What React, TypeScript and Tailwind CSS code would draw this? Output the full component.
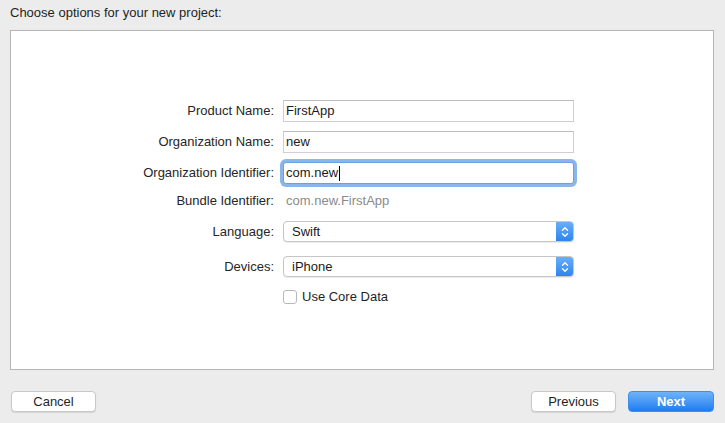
import React from "react";

const font = { fontFamily: '"Liberation Sans", Arial, sans-serif' };

function TextField({ value, focused }: { value: string; focused?: boolean }) {
  if (focused) {
    return (
      <div className="h-[22px] w-[291px] rounded-[3px] ring-[3px] ring-[#8ab6ea] border border-[#6d9fdc] bg-white px-[2px] flex items-center text-[13px] text-[#1a1a1a]">
        <span>{value}</span>
        <span className="ml-[1px] h-[15px] w-px bg-black" />
      </div>
    );
  }
  return (
    <div className="h-[22px] w-[291px] border border-[#cfcfcf] border-t-[#bdbdbd] bg-white px-[2px] flex items-center text-[13px] text-[#1a1a1a]">
      {value}
    </div>
  );
}

function Popup({ value }: { value: string }) {
  return (
    <div className="h-[21px] w-[291px] flex rounded-[4px] border border-[#c6c6c6] bg-white shadow-[0_1px_1px_rgba(0,0,0,0.08)] overflow-hidden">
      <div className="flex-1 flex items-center pl-[8px] text-[13px] text-[#1a1a1a]">{value}</div>
      <div className="w-[17px] flex items-center justify-center bg-gradient-to-b from-[#69aef7] to-[#2d84ee]">
        <svg width="8" height="12" viewBox="0 0 8 12" fill="none" stroke="white" strokeWidth="1.4" strokeLinecap="round" strokeLinejoin="round">
          <path d="M1.5 4.2 L4 1.7 L6.5 4.2" />
          <path d="M1.5 7.8 L4 10.3 L6.5 7.8" />
        </svg>
      </div>
    </div>
  );
}

function Row({ label, children, className = "" }: { label: string; children: React.ReactNode; className?: string }) {
  return (
    <div className={"flex items-center " + className}>
      <div className="w-[263px] text-right text-[13px] text-[#262626]">{label}</div>
      <div className="ml-[9px]">{children}</div>
    </div>
  );
}

function Button({ label, primary }: { label: string; primary?: boolean }) {
  if (primary) {
    return (
      <div className="w-[86px] h-[21px] rounded-[4px] bg-gradient-to-b from-[#6db3f9] to-[#1d7cf0] border border-[#3f8ee8] flex items-center justify-center text-[13px] text-white font-semibold">
        {label}
      </div>
    );
  }
  return (
    <div className="w-[85px] h-[21px] rounded-[4px] bg-white border border-[#c8c8c8] shadow-[0_1px_1px_rgba(0,0,0,0.1)] flex items-center justify-center text-[13px] text-[#1f1f1f]">
      {label}
    </div>
  );
}

export default function App() {
  return (
    <div style={font} className="w-[725px] h-[423px] bg-[#ececec] flex flex-col pl-[10px] pr-[11px]">
      <div className="pt-[5px] h-[30px] text-[13px] leading-[16px] text-[#1f1f1f]">Choose options for your new project:</div>
      <div className="h-[340px] border border-[#b5b5b5] bg-white pt-[69px]">
        <Row label="Product Name:" className="h-[22px]">
          <TextField value="FirstApp" />
        </Row>
        <Row label="Organization Name:" className="h-[22px] mt-[9px]">
          <TextField value="new" />
        </Row>
        <Row label="Organization Identifier:" className="h-[22px] mt-[9px]">
          <TextField value="com.new" focused />
        </Row>
        <Row label="Bundle Identifier:" className="h-[22px] mt-[6px]">
          <div className="pl-[3px] text-[13px] text-[#8a8a8a]">com.new.FirstApp</div>
        </Row>
        <Row label="Language:" className="h-[21px] mt-[9px]">
          <Popup value="Swift" />
        </Row>
        <Row label="Devices:" className="h-[21px] mt-[14px]">
          <Popup value="iPhone" />
        </Row>
        <div className="mt-[9px] h-[22px] flex items-center pl-[272px]">
          <div className="w-[14px] h-[14px] rounded-[3px] border border-[#b9b9b9] bg-white" />
          <span className="ml-[5px] text-[13px] text-[#1f1f1f]">Use Core Data</span>
        </div>
      </div>
      <div className="mt-[21px] flex items-center">
        <div className="ml-[1px]">
          <Button label="Cancel" />
        </div>
        <div className="ml-auto flex gap-[12px]">
          <Button label="Previous" />
          <Button label="Next" primary />
        </div>
      </div>
    </div>
  );
}
